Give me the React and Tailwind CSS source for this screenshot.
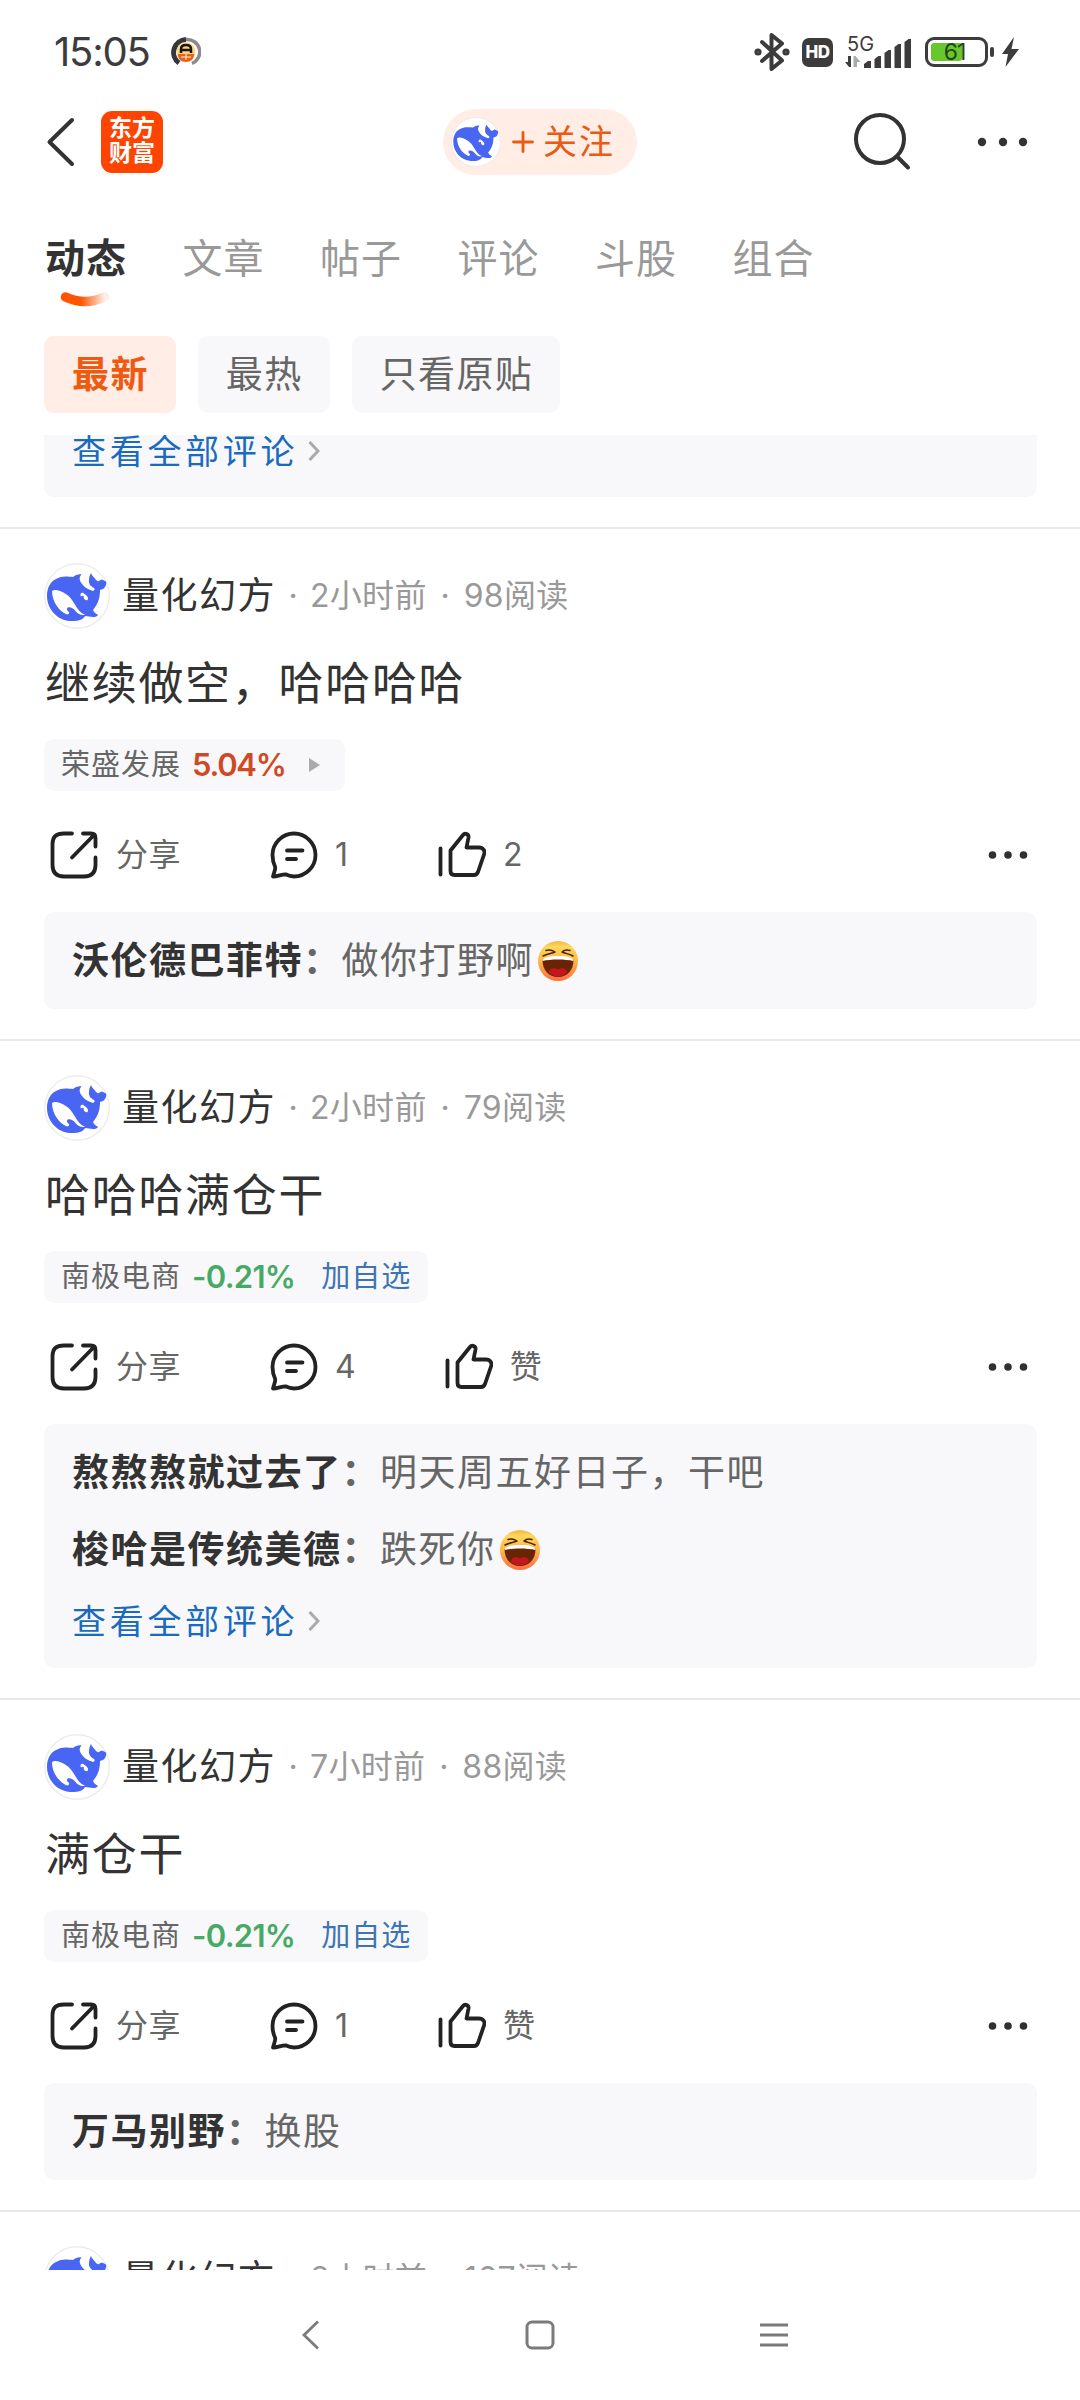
const font =
  "[font-family:Inter,'Noto_Sans_CJK_SC',sans-serif]";

const tabs = ["动态", "文章", "帖子", "评论", "斗股", "组合"];
const filters = ["最新", "最热", "只看原贴"];

const posts = [
  {
    id: 1,
    time: "2小时前",
    reads: "98阅读",
    title: "继续做空，哈哈哈哈",
    stock: "荣盛发展",
    change: "5.04%",
    up: true,
    comments: 1,
    likes: "2",
    replies: [{ user: "沃伦德巴菲特", text: "做你打野啊", laugh: true }],
  },
  {
    id: 2,
    time: "2小时前",
    reads: "79阅读",
    title: "哈哈哈满仓干",
    stock: "南极电商",
    change: "-0.21%",
    comments: 4,
    likes: "赞",
    replies: [
      { user: "熬熬熬就过去了", text: "明天周五好日子，干吧" },
      { user: "梭哈是传统美德", text: "跌死你", laugh: true },
    ],
    more: true,
  },
  {
    id: 3,
    time: "7小时前",
    reads: "88阅读",
    title: "满仓干",
    stock: "南极电商",
    change: "-0.21%",
    comments: 1,
    likes: "赞",
    replies: [{ user: "万马别野", text: "换股" }],
  },
];

const Whale = ({ className }) => (
  <svg viewBox="0 0 66 66" className={className}>
    <circle cx="33" cy="33" r="32.3" fill="#fff" stroke="#ececee" strokeWidth="1.4" />
    <path
      fill="#4865f3"
      d="M3 33C3 24 7 18 12 16c5-3 9-3 17-2 3-2 5-3 8.500-2.500C35 14 35 17 38 21c3 4 6 5 11 7 2-1 2-2 1-3-4-2-5.500-5-5-8 0-3 1-5 2-7 1 3 3 4 5 7 1 1 2 1.500 3 1 1-1 2-1.500 3-1.500l4 2c.5 2 0 4-1 5.500-1 2-3 2.500-5 3 0 8-2 14-7 20 1 2.500 3 3.500 5 5-1 1.500-3 2.200-5 2-3 0-5-1-8-1-1 2-3 3.500-5 4-3 1.200-7 1.200-10 1C13 57 3 46 3 33z"
    />
    <path
      fill="#fff"
      d="M8 28c2-1.500 5-1 8 0 4 1.500 8 4 10.500 7 3.500 4 5.500 9 8.500 12.500 2 2.500 4 3.500 6 4-2 1-4 .5-6-.5-3-1.500-4-4.500-7-6-2-1-4.500-1-5 .5-.3 1.500.8 2.500 2 3.500.5 1.500-.5 2.500-2 2.500C15 48 8 39 8 28z"
    />
    <path
      fill="#fff"
      d="M36.500 31c1-2 3-1.500 4 0 2 1.200 4 3 3.500 5-.5 1.800-2.500 1.500-3.500.2-.6-1.200-1.500-2-2.300-2.200-1 0-2-1.200-1.700-3z"
    />
    <circle cx="38.500" cy="34" r="1.300" fill="#4865f3" />
  </svg>
);

const Laugh = () => (
  <svg viewBox="0 0 40 40" className="w-[40px] h-[40px] ml-[4px]">
    <defs>
      <linearGradient id="face" x1="0" y1="0" x2="0" y2="1">
        <stop offset="0" stopColor="#f4b73e" />
        <stop offset="0.150" stopColor="#fdd85c" />
        <stop offset="0.500" stopColor="#fcb64a" />
        <stop offset="1" stopColor="#fb6f40" />
      </linearGradient>
    </defs>
    <circle cx="20" cy="20" r="20" fill="url(#face)" />
    <path
      d="M8 9.500c3-1 6-.5 9 1.500M5 15c4-2 8-2.500 12-4M32 9.500c-3-1-6-.5-8 1.500M35 15c-4-2-7-2.500-11-4"
      fill="none"
      stroke="#4c2408"
      strokeWidth="1.500"
      strokeLinecap="round"
    />
    <path d="M4.500 19c10-3 21-3 31 0 0 10-6 17-15.500 17S4.500 29 4.500 19z" fill="#6a2404" />
    <path d="M4.500 20c0-3 5-5 15.500-5s15.500 2 15.500 5c-8-2-23-2-31 0z" fill="#fff" />
    <path d="M10.500 31c2-4 6-4.500 9.500-2.500 3.500-2 7.500-1.500 9.500 2.500-5 6-14 6-19 0z" fill="#c4161c" />
  </svg>
);

const ShareIcon = () => (
  <svg viewBox="0 0 48 48" className="w-[48px] h-[48px]" fill="none" stroke="#222" strokeWidth="3.800" strokeLinecap="round">
    <path d="M22 2.500H14C6 2.500 2.500 6 2.500 13v21c0 8 4 11.500 11.500 11.500h20c8 0 11.500-4 11.500-11.500v-7.500" />
    <path d="M33 2.500h8c3 0 4.500 1.500 4.500 4.500v8.500M44 4L22 26.500" />
  </svg>
);

const CommentIcon = () => (
  <svg viewBox="0 0 48 48" className="w-[48px] h-[48px]" fill="none" stroke="#222" strokeWidth="3.800" strokeLinecap="round" strokeLinejoin="round">
    <path d="M3 45.500c1-4 2.500-6.500 2.200-9.500C3.500 32.500 2.500 28.500 2.500 24A21.500 21.500 0 0 1 24 2.500 21.500 21.500 0 0 1 45.500 24 21.500 21.500 0 0 1 24 45.500c-3.500 0-6-1-8.500-2.200-4 0-8 2.200-12.500 2.200z" />
    <path d="M17 19.500h15.500M17 28h9" />
  </svg>
);

const LikeIcon = () => (
  <svg viewBox="0 0 48 48" className="w-[48px] h-[48px]" fill="none" stroke="#222" strokeWidth="3.800" strokeLinecap="round" strokeLinejoin="round">
    <path d="M2.500 17.500v26" />
    <path d="M12.500 19.500L25 4c2-2.500 6-1 5.500 2.500L28.500 16.500H41c4 0 6.500 3.500 5 7l-6 17.500c-.8 2-2 3-4 3H16.500c-2.500 0-4-1.500-4-4z" />
  </svg>
);

const SeeAll = () => (
  <div className="flex items-center h-[50px] text-[34px] tracking-[3.700px] text-[#1a6bbd]">
    查看全部评论
    <svg viewBox="0 0 12 20" className="w-[12px] h-[20px] ml-[10px]" fill="none" stroke="#aaa" strokeWidth="3">
      <path d="M1.500 1l8.500 9-8.500 9" />
    </svg>
  </div>
);

const Author = ({ time, reads }) => (
  <div className="flex items-center h-[66px] whitespace-nowrap">
    <Whale className="w-[66px] h-[66px]" />
    <span className="ml-[12px] text-[37px] tracking-[1.500px] text-[#333]">量化幻方</span>
    <span className="w-[34px] text-center text-[32px] text-[#999]">·</span>
    <span className="text-[32px] tracking-[0.300px] text-[#999]">{time}</span>
    <span className="w-[37px] text-center text-[32px] text-[#999]">·</span>
    <span className="text-[32px] tracking-[0.300px] text-[#999]">{reads}</span>
  </div>
);

const Post = ({ post }) => (
  <div className="pl-[44px] pr-[43px] pt-[34px] pb-[30px] border-b-2 border-[#e8e8e8]">
    <Author time={post.time} reads={post.reads} />
    <div className="mt-[23px] h-[63px] leading-[64px] pl-px text-[45px] tracking-[1.700px] text-[#333]">
      {post.title}
    </div>
    <div className="mt-[24px] inline-flex items-center h-[52px] px-[17px] rounded-[10px] bg-[#f8f8fa] text-[29px] text-[#666]">
      <span className="tracking-[1px]">{post.stock}</span>
      <span
        className={
          post.up
            ? "ml-[11px] text-[31px] tracking-[-1.300px] font-semibold text-[#cf4a24]"
            : "ml-[11px] text-[31px] tracking-[-0.700px] font-semibold text-[#46aa66]"
        }
      >
        {post.change}
      </span>
      {post.up ? (
        <svg viewBox="0 0 11 14" className="w-[11px] h-[14px] ml-[23px] mr-[8px]">
          <path d="M0 0l11 7-11 7z" fill="#aaa" />
        </svg>
      ) : (
        <span className="ml-[26px] tracking-[1px] text-[#3d74b4]">加自选</span>
      )}
    </div>
    <div className="mt-[40px] h-[48px] flex items-center text-[32px] text-[#666]">
      <div className="flex items-center w-[220px] pl-[6px]">
        <ShareIcon />
        <span className="ml-[18px] tracking-[0.500px]">分享</span>
      </div>
      <div className="flex items-center pl-[6px]">
        <CommentIcon />
        <span className="ml-[17px] min-w-[14px]">{post.comments}</span>
      </div>
      <div className="flex items-center ml-[89px]">
        <LikeIcon />
        <span className="ml-[17px]">{post.likes}</span>
      </div>
      <svg viewBox="0 0 40 8" className="w-[40px] h-[8px] ml-auto mr-[9px]" fill="#303030">
        <circle cx="4.500" cy="4" r="3.800" />
        <circle cx="20" cy="4" r="3.800" />
        <circle cx="35.500" cy="4" r="3.800" />
      </svg>
    </div>
    <div className="mt-[33px] px-[28px] py-[10px] rounded-[10px] bg-[#f8f8fa]">
      {post.replies.map((reply) => (
        <div key={reply.user} className="flex items-center h-[77px] text-[37px] tracking-[1.500px] text-[#666]">
          <b className="font-bold text-[#333]">{reply.user}</b>
          <span className="font-bold">：</span>
          {reply.text}
          {reply.laugh && <Laugh />}
        </div>
      ))}
      {post.more && (
        <div className="pt-[8px] pb-[12px]">
          <SeeAll />
        </div>
      )}
    </div>
  </div>
);

const StatusBar = () => (
  <div className="h-[104px] flex items-center pl-[54px] pr-[61px] text-[#3c3c3c]">
    <span className="w-[117px] text-[40px] tracking-[-1.200px]">15:05</span>
    <svg viewBox="0 0 30 30" className="w-[30px] h-[30px]">
      <path d="M8 26A13 13 0 0 1 15 2.500" fill="none" stroke="#35353d" strokeWidth="5" />
      <path d="M15 2.500a12.500 12.500 0 0 1 6 24" fill="none" stroke="#8b8b8f" strokeWidth="3.500" />
      <circle cx="15" cy="15" r="9.500" fill="#fbd67c" />
      <path d="M7 17h16c0 5-3 8-8 8s-8-3-8-8z" fill="#e8601c" />
      <path d="M10 16v-4c0-3 2-4 5-4s5 1 5 4v4M10 13h10" fill="none" stroke="#1b1712" strokeWidth="2.500" />
      <path d="M10 20h10M15 17v6" stroke="#fff3d6" strokeWidth="1" />
    </svg>
    <svg viewBox="0 0 36 40" className="w-[36px] h-[40px] ml-auto" fill="none" stroke="#3c3c3c" strokeWidth="4" strokeLinejoin="round" strokeLinecap="round">
      <path d="M8 10l20 18.500L17.500 37V3L28 11.500 8 29" />
      <circle cx="4" cy="20" r="1.600" />
      <circle cx="32" cy="20" r="1.600" />
    </svg>
    <span className="w-[31px] h-[29px] ml-[12px] rounded-[7px] bg-[#3c3c3c] text-white text-[17px] leading-[29px] font-extrabold text-center tracking-[-0.500px]">
      HD
    </span>
    <div className="ml-[12px] w-[68px] h-[34px] flex items-end relative">
      <span className="absolute left-[2px] top-[-1px] text-[20px] leading-[20px]">5G</span>
      <svg viewBox="0 0 68 34" className="w-[68px] h-[34px]" fill="#3c3c3c">
        <path d="M0 27l4 5h2V21H3v6z" />
        <path d="M8.500 32V21h2l5 6h-3.500v5z" fill="#aaa" />
        <path d="M19 33v-4l4-3h3v7zM29.500 33V24l4-3h2.500v12zM39.500 33V18l4-3h2.500v18zM49.500 33V12l4-3h2.500v24zM59.500 33V7l4-3h2.500v29z" />
      </svg>
    </div>
    <div className="ml-[12px] w-[63px] h-[30px] p-[3px] rounded-[9px] border-[3px] border-[#3c3c3c] relative">
      <div className="w-[31px] h-[18px] rounded-[3px] bg-[#66c82c]" />
      <span className="absolute left-[-2px] top-0 w-full text-center text-[23px] leading-[25px] tracking-[-1px] text-[#26441a]">61</span>
    </div>
    <div className="ml-[2px] w-[4px] h-[10px] rounded-[2px] bg-[#3c3c3c]" />
    <svg viewBox="0 0 18 30" className="w-[18px] h-[30px] ml-[7px]" fill="#3c3c3c">
      <path d="M13 0L1 17h6L4.500 30 18 12h-7.500z" />
    </svg>
  </div>
);

const Header = () => (
  <div className="h-[76px] flex items-center pl-[46px] pr-[49px]">
    <svg viewBox="0 0 30 50" className="w-[30px] h-[50px]" fill="none" stroke="#333" strokeWidth="4" strokeLinecap="round" strokeLinejoin="round">
      <path d="M26 3L3.500 25 26 47" />
    </svg>
    <div className="w-[62px] h-[62px] ml-[25px] pt-[5px] rounded-[11px] bg-[#ff4400] text-white text-[23px] leading-[25px] font-bold text-center">
      东方
      <br />
      财富
    </div>
    <button className="flex items-center w-[194px] h-[66px] ml-[280px] pl-[8px] rounded-full bg-[#ffede6] text-[#ea5a12]">
      <Whale className="w-[50px] h-[50px]" />
      <svg viewBox="0 0 22 22" className="w-[22px] h-[22px] ml-[11px]" stroke="#ea5a12" strokeWidth="2.800" strokeLinecap="round">
        <path d="M11 1.500v19M1.500 11h19" />
      </svg>
      <span className="ml-[9px] -mt-[2px] text-[34px] tracking-[2px]">关注</span>
    </button>
    <svg viewBox="0 0 60 60" className="w-[60px] h-[60px] ml-auto" fill="none" stroke="#333" strokeWidth="4" strokeLinecap="round">
      <circle cx="28" cy="27" r="24" />
      <path d="M45 44.500L56 55.500" />
    </svg>
    <svg viewBox="0 0 54 10" className="w-[54px] h-[10px] ml-[65px]" fill="#333">
      <circle cx="5" cy="5" r="4.200" />
      <circle cx="26" cy="5" r="4.200" />
      <circle cx="46" cy="5" r="4.200" />
    </svg>
  </div>
);

const App = () => {
  return (
    <div className={`${font} w-[1080px] h-[2400px] flex flex-col bg-white overflow-hidden`}>
      <StatusBar />
      <Header />
      <div className="flex gap-[55.500px] h-[126px] pt-[49px] pl-[45px]">
        {tabs.map((tab, i) => (
          <div key={tab} className="w-[82px] whitespace-nowrap">
            <div
              className={
                i === 0
                  ? "text-[40px] leading-[60px] tracking-[1px] font-bold text-[#333]"
                  : "text-[40px] leading-[60px] tracking-[1px] text-[#999]"
              }
            >
              {tab}
            </div>
            {i === 0 && (
              <svg viewBox="0 0 50 18" className="w-[50px] h-[18px] ml-[15px] mt-[2px]">
                <defs>
                  <linearGradient id="smile" x1="0" y1="0" x2="1" y2="0">
                    <stop offset="0.400" stopColor="#ff5500" />
                    <stop offset="1" stopColor="#ff5500" stopOpacity="0.100" />
                  </linearGradient>
                </defs>
                <path d="M5.500 6q19.500 9 39 0" fill="none" stroke="url(#smile)" strokeWidth="9.500" strokeLinecap="round" />
              </svg>
            )}
          </div>
        ))}
      </div>
      <div className="flex gap-[22px] h-[129px] pt-[30px] pl-[44px]">
        {filters.map((name, i) => (
          <button
            key={name}
            className={
              i === 0
                ? "h-[77px] pl-[28px] pr-[27px] rounded-[10px] text-[37px] tracking-[1.400px] bg-[#ffede6] text-[#f05a10] font-bold"
                : "h-[77px] pl-[28px] pr-[27px] rounded-[10px] text-[37px] tracking-[1.400px] bg-[#f8f8fa] text-[#666]"
            }
          >
            {name}
          </button>
        ))}
      </div>
      <div className="flex-1 min-h-0 overflow-hidden">
        <div className="h-[94px] pl-[44px] pr-[43px] border-b-2 border-[#e8e8e8]">
          <div className="h-[62px] px-[28px] rounded-b-[10px] bg-[#f8f8fa] overflow-hidden">
            <div className="-mt-[9px]">
              <SeeAll />
            </div>
          </div>
        </div>
        {posts.map((post) => (
          <Post key={post.id} post={post} />
        ))}
        <div className="px-[44px] pt-[34px]">
          <Author time="8小时前" reads="167阅读" />
        </div>
      </div>
      <div className="h-[130px] flex justify-between items-center pl-[300px] pr-[292px]">
        <svg viewBox="0 0 20 30" className="w-[20px] h-[30px]" fill="none" stroke="#7b7b7b" strokeWidth="2.800">
          <path d="M18 1.500L4 15l14 13.500" />
        </svg>
        <svg viewBox="0 0 30 30" className="w-[30px] h-[30px]" fill="none" stroke="#7b7b7b" strokeWidth="3">
          <rect x="2" y="2" width="26" height="26" rx="5" />
        </svg>
        <svg viewBox="0 0 28 26" className="w-[28px] h-[26px]" stroke="#7b7b7b" strokeWidth="3">
          <path d="M0 3h28M0 13h28M0 23h28" />
        </svg>
      </div>
    </div>
  );
};

export default App;
